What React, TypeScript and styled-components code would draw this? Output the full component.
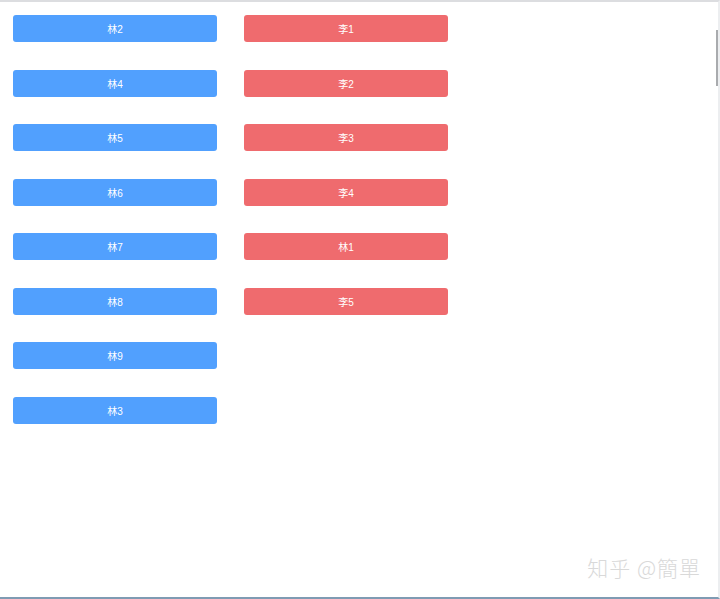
import React from 'react';
import styled, { createGlobalStyle } from 'styled-components';

const GlobalStyle = createGlobalStyle`
  html, body {
    margin: 0;
    padding: 0;
    background: #ffffff;
  }
  body {
    font-family: "Liberation Sans", "Noto Sans CJK SC", sans-serif;
  }
`;

const Frame = styled.div`
  position: relative;
  box-sizing: border-box;
  width: 720px;
  height: 599px;
  border-top: 2px solid #dcdde0;
  border-right: 2px solid #eceef0;
  border-bottom: 2px solid #7f9bb3;
  overflow: hidden;
`;

const Columns = styled.div`
  display: flex;
  gap: 27px;
  padding: 13px 0 0 13px;
`;

const Column = styled.div`
  display: flex;
  flex-direction: column;
  gap: 27.5px;
  width: 204px;
`;

const Button = styled.button<{ $tone: 'blue' | 'red' }>`
  height: 27px;
  width: 100%;
  border: none;
  border-radius: 3px;
  padding: 0;
  background: ${({ $tone }) => ($tone === 'blue' ? '#51a0fe' : '#ef6b6e')};
  color: #ffffff;
  font-family: "Liberation Sans", "Noto Sans CJK SC", sans-serif;
  font-size: 10px;
  text-align: center;
  cursor: pointer;
`;

const ScrollThumb = styled.div`
  position: absolute;
  right: 0;
  top: 28px;
  width: 2px;
  height: 56px;
  background: #a9abae;
`;

const Watermark = styled.div`
  position: absolute;
  right: 17px;
  bottom: 15px;
  color: #d9d9d9;
  font-family: "Noto Sans CJK SC", "Noto Sans CJK TC", sans-serif;
  font-weight: 300;
  font-size: 21px;
  letter-spacing: 1px;
  pointer-events: none;
`;

const left = ['林2', '林4', '林5', '林6', '林7', '林8', '林9', '林3'];
const right = ['李1', '李2', '李3', '李4', '林1', '李5'];

export default function App() {
  return (
    <>
      <GlobalStyle />
      <Frame>
        <Columns>
          <Column>
            {left.map((name) => (
              <Button key={name} $tone="blue">
                {name}
              </Button>
            ))}
          </Column>
          <Column>
            {right.map((name) => (
              <Button key={name} $tone="red">
                {name}
              </Button>
            ))}
          </Column>
        </Columns>
        <ScrollThumb />
        <Watermark>知乎 @簡單</Watermark>
      </Frame>
    </>
  );
}
